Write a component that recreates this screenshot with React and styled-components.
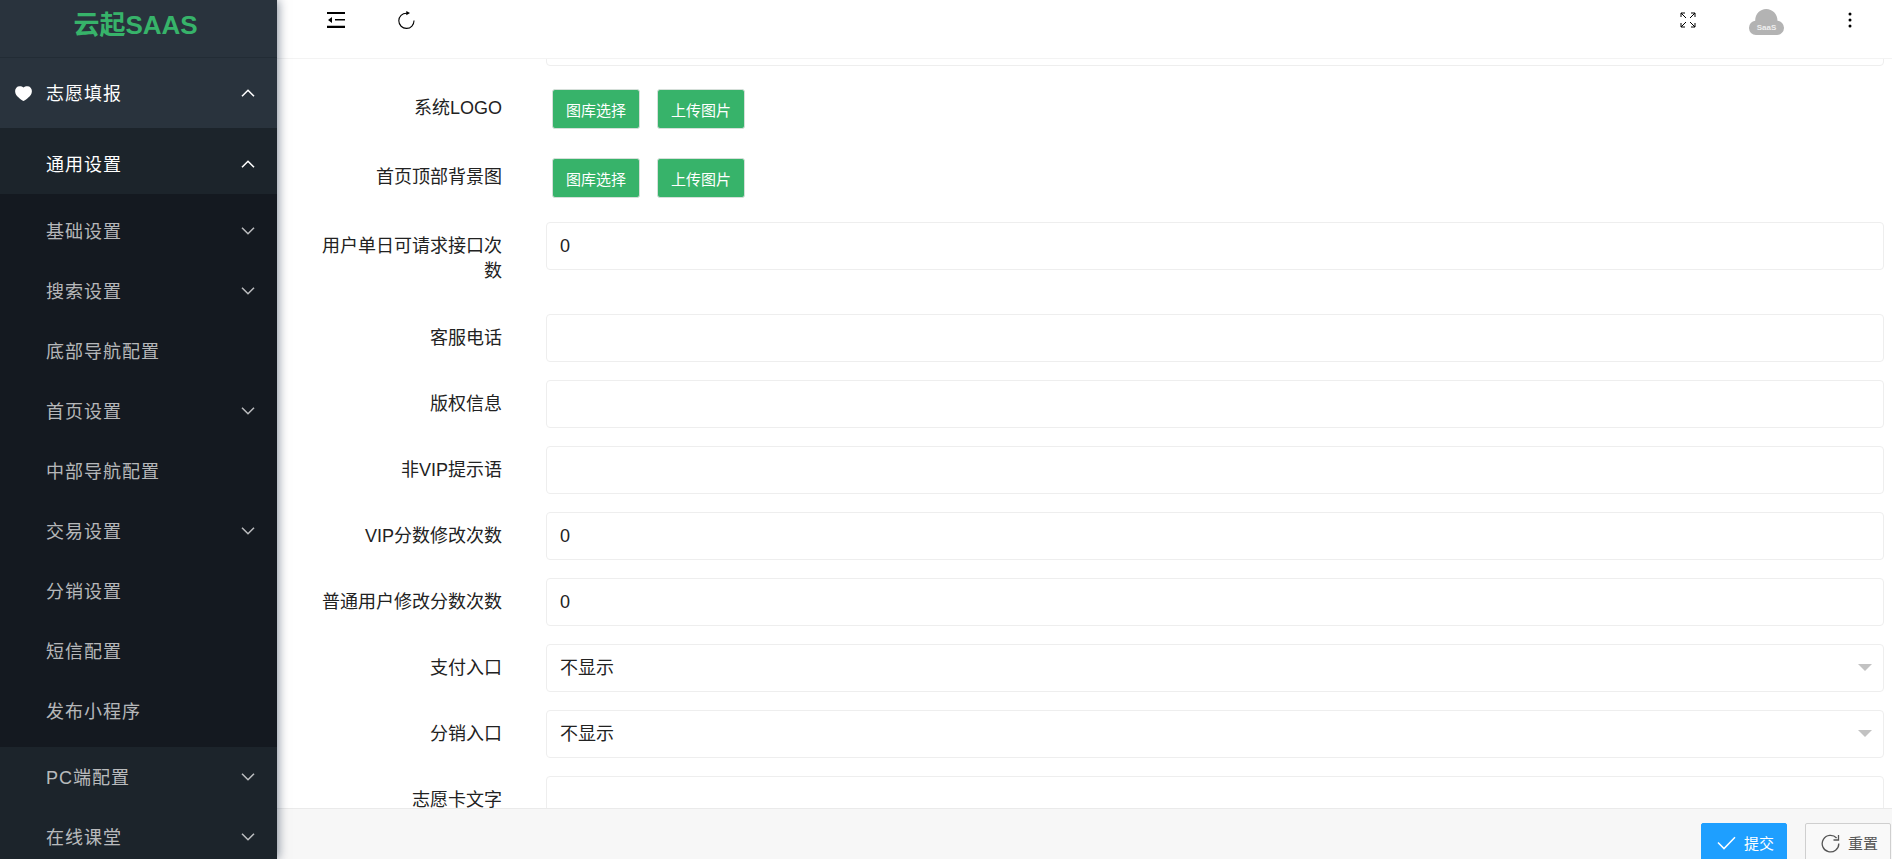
import React, { useLayoutEffect, useRef } from "react";
import styled, { createGlobalStyle } from "styled-components";

const Global = createGlobalStyle`
  *, *::before, *::after { box-sizing: border-box; }
  body {
    margin: 0;
    color: #222;
    font-family: "Liberation Sans", "Noto Sans CJK SC", sans-serif;
    font-size: 18px;
    line-height: 25px;
    background: #fff;
  }
  button, input, select { font: inherit; color: inherit; }
  button { cursor: pointer; }
  svg { display: block; }
`;

const Shell = styled.div`
  display: flex;
  height: 100vh;
  overflow: hidden;
`;

const Sidebar = styled.nav`
  position: relative;
  z-index: 1;
  flex: 0 0 277px;
  overflow: hidden;
  background: #1c242b;
  color: rgba(255, 255, 255, 0.7);
  box-shadow: 1px 0 10px rgba(0, 21, 50, 0.5);
`;

const Brand = styled.div`
  display: flex;
  justify-content: center;
  height: 58px;
  padding: 8px 6px 0 0;
  border-bottom: 1px solid #222c35;
  background: #29333d;
  color: #37b36a;
  font-size: 26px;
  font-weight: bold;
  line-height: 34px;
`;

const MenuLink = styled.a`
  display: flex;
  align-items: center;
  height: 60px;
  padding: 0 22px 0 46px;
  color: ${(p) => (p.$active ? "#fff" : "inherit")};
  text-decoration: none;
  letter-spacing: 1px;
  span {
    flex: 1;
    padding-top: 2px;
  }
`;

const RootLink = styled(MenuLink)`
  height: 70px;
  padding-left: 15px;
  background: #29333d;
  gap: 14px;
`;

const Group = styled.div`
  padding-top: 6px;
`;

const SubGroup = styled.div`
  padding: 7px 0 6px;
  background: #141920;
`;

const Main = styled.div`
  display: flex;
  flex: 1;
  min-width: 0;
  flex-direction: column;
`;

const Header = styled.header`
  display: flex;
  flex: 0 0 59px;
  justify-content: space-between;
  align-items: flex-start;
  padding: 8px 29px 0 50px;
  border-bottom: 1px solid #f3f3f3;
`;

const Tools = styled.div`
  display: flex;
  align-items: center;
  gap: 53px;
`;

const IconButton = styled.button`
  display: flex;
  align-items: center;
  justify-content: center;
  height: 24px;
  padding: 0;
  border: 0;
  background: none;
  color: #000;
`;

const Scroller = styled.div`
  flex: 1;
  min-height: 0;
  overflow: auto;
  scrollbar-width: none;
`;

const Form = styled.form`
  display: flex;
  flex-direction: column;
  gap: 18px;
  padding: 19px 8px 18px 43px;
`;

const Row = styled.div`
  display: flex;
  align-items: flex-start;
  min-height: ${(p) => (p.$tall ? 74 : 48)}px;
`;

const Label = styled.label`
  flex: 0 0 182px;
  margin-right: 44px;
  padding-top: 12px;
  text-align: right;
`;

const Input = styled.input`
  flex: 1;
  min-width: 0;
  height: 48px;
  padding: 0 13px;
  border: 1px solid #eee;
  border-radius: 4px;
  background: #fff;
  outline: none;
`;

const SelectBox = styled.div`
  position: relative;
  display: flex;
  flex: 1;
  min-width: 0;
`;

const Select = styled(Input)`
  appearance: none;
`;

const Caret = styled.svg`
  position: absolute;
  top: 20px;
  right: 12px;
  pointer-events: none;
`;

const UploadRow = styled.div`
  display: flex;
  align-items: flex-start;
  height: 51px;
  padding-top: 5px;
`;

const UploadTitle = styled.span`
  flex: 0 0 182px;
  margin-right: 50px;
  padding-top: 7px;
  text-align: right;
`;

const UploadButtons = styled.div`
  display: flex;
  gap: 17px;
`;

const UploadButton = styled.button`
  height: 40px;
  padding: 3px 13px 0;
  border: 1px solid #d5dfd9;
  border-radius: 3px;
  background: #37b36a;
  color: #fff;
  font-size: 15px;
  white-space: nowrap;
`;

const Footer = styled.footer`
  display: flex;
  flex: 0 0 51px;
  justify-content: flex-end;
  align-items: flex-start;
  gap: 18px;
  padding: 14px 1px 0;
  overflow: hidden;
  border-top: 1px solid #eaeaea;
  background: #f7f7f7;
`;

const ActionButton = styled.button`
  display: flex;
  flex-shrink: 0;
  align-items: center;
  gap: 8px;
  height: 40px;
  padding: 0 12px 0 15px;
  border: 1px solid ${(p) => (p.$primary ? "#1e9fff" : "#cfcfcf")};
  border-radius: 2px;
  background: ${(p) => (p.$primary ? "#1e9fff" : "#f9f9f9")};
  color: ${(p) => (p.$primary ? "#fff" : "#555")};
  font-size: 15px;
  white-space: nowrap;
`;

const Chevron = ({ up }) => (
  <svg width="14" height="8" viewBox="0 0 14 8" fill="none" stroke="currentColor" strokeWidth="1.6" aria-hidden="true">
    <path d={up ? "M1 7.2 7 1.3l6 5.900" : "M1 .8l6 5.900L13 .8"} />
  </svg>
);

const Heart = () => (
  <svg width="17" height="15" viewBox="0 0 17 15" fill="#fff" aria-hidden="true">
    <path d="M8.500 15C7.600 15 1.800 10.800.6 7.800-.9 3.600 1.200.2 4.600.2c1.700 0 3 .4 3.900 1.300C9.400.6 10.700.2 12.400.2c3.400 0 5.500 3.400 4 7.600C15.200 10.800 9.400 15 8.500 15Z" />
  </svg>
);

const FoldIcon = () => (
  <svg width="18" height="16" viewBox="0 0 18 16" aria-hidden="true">
    <path d="M0 0h18v2H0zM8 7h10v1.600H8zM0 13.800h18V16H0zM5 5v6L1 8z" fill="currentColor" />
  </svg>
);

const RefreshIcon = () => (
  <svg width="17" height="18" viewBox="0 0 17 18" fill="none" stroke="currentColor" strokeWidth="1.100" aria-hidden="true">
    <path d="M16 9.500A7.600 7.600 0 1 1 8.500 2.200H10" />
    <path d="M8.300 0v4.200L12 2.100z" fill="currentColor" stroke="none" />
  </svg>
);

const ExpandIcon = () => (
  <svg width="16" height="16" viewBox="0 0 16 16" fill="none" stroke="currentColor" strokeWidth="1" aria-hidden="true">
    <path d="M1 5V1h4M1 1l5 5M11 1h4v4M15 1l-5 5M1 11v4h4M1 15l5-5M15 11v4h-4M15 15l-5-5" />
  </svg>
);

const CloudIcon = () => (
  <svg width="35" height="30" viewBox="0 -4 35 30" role="img" aria-label="SaaS">
    <path d="M7 26a7 7 0 0 1-7-7.200A7.200 7.200 0 0 1 6.200 11.700C6.200 5 11 0 17.200 0s11.300 5 11.300 11.700A7.300 7.300 0 0 1 35 18.800 7.100 7.100 0 0 1 28 26Z" fill="#b3b3b3" />
    <text x="17.500" y="20.500" textAnchor="middle" fontSize="8" fontWeight="bold" fill="#eee">SaaS</text>
  </svg>
);

const DotsIcon = () => (
  <svg width="26" height="16" viewBox="0 0 26 16" fill="currentColor" aria-hidden="true">
    <circle cx="13" cy="2" r="1.500" /><circle cx="13" cy="8" r="1.500" /><circle cx="13" cy="14" r="1.500" />
  </svg>
);

const CheckIcon = () => (
  <svg width="19" height="14" viewBox="0 0 19 14" fill="none" stroke="currentColor" strokeWidth="1.500" aria-hidden="true">
    <path d="M1 6.500 7 12.600 18 1.200" />
  </svg>
);

const ResetIcon = () => (
  <svg width="19" height="19" viewBox="0 0 19 19" fill="none" stroke="currentColor" strokeWidth="1.300" aria-hidden="true">
    <path d="M17.800 9.500A8.300 8.300 0 1 1 15.600 4M17.500 1v5h-5" />
  </svg>
);

const subItems = [
  ["基础设置", true],
  ["搜索设置", true],
  ["底部导航配置", false],
  ["首页设置", true],
  ["中部导航配置", false],
  ["交易设置", true],
  ["分销设置", false],
  ["短信配置", false],
  ["发布小程序", false],
];

const MenuItem = ({ text, expandable }) => (
  <MenuLink href="#">
    <span>{text}</span>
    {expandable && <Chevron />}
  </MenuLink>
);

const Field = ({ id, label, value = "", tall }) => (
  <Row $tall={tall}>
    <Label htmlFor={id}>{label}</Label>
    <Input id={id} type="text" defaultValue={value} />
  </Row>
);

const SelectField = ({ id, label }) => (
  <Row>
    <Label htmlFor={id}>{label}</Label>
    <SelectBox>
      <Select as="select" id={id} defaultValue="0">
        <option value="0">不显示</option>
        <option value="1">显示</option>
      </Select>
      <Caret width="14" height="7" viewBox="0 0 14 7" aria-hidden="true">
        <path d="M0 0h14L7 7z" fill="#c2c2c2" />
      </Caret>
    </SelectBox>
  </Row>
);

const UploadField = ({ label }) => (
  <UploadRow role="group" aria-label={label}>
    <UploadTitle>{label}</UploadTitle>
    <UploadButtons>
      <UploadButton type="button">图库选择</UploadButton>
      <UploadButton type="button">上传图片</UploadButton>
    </UploadButtons>
  </UploadRow>
);

export default function App() {
  const scroller = useRef(null);

  useLayoutEffect(() => {
    scroller.current.scrollTop = 60;
  }, []);

  return (
    <>
      <Global />
      <Shell>
        <Sidebar>
          <Brand>云起SAAS</Brand>
          <RootLink href="#" $active>
            <Heart />
            <span>志愿填报</span>
            <Chevron up />
          </RootLink>
          <Group>
            <MenuLink href="#" $active>
              <span>通用设置</span>
              <Chevron up />
            </MenuLink>
            <SubGroup>
              {subItems.map(([text, expandable]) => (
                <MenuItem key={text} text={text} expandable={expandable} />
              ))}
            </SubGroup>
            <MenuItem text="PC端配置" expandable />
            <MenuItem text="在线课堂" expandable />
          </Group>
        </Sidebar>
        <Main>
          <Header>
            <Tools>
              <IconButton aria-label="收起菜单"><FoldIcon /></IconButton>
              <IconButton aria-label="刷新"><RefreshIcon /></IconButton>
            </Tools>
            <Tools>
              <IconButton aria-label="全屏"><ExpandIcon /></IconButton>
              <IconButton aria-label="账户"><CloudIcon /></IconButton>
              <IconButton aria-label="更多"><DotsIcon /></IconButton>
            </Tools>
          </Header>
          <Scroller ref={scroller}>
            <Form id="settings">
              <Row>
                <Label as="span" />
                <Input type="text" aria-label="系统名称" />
              </Row>
              <UploadField label="系统LOGO" />
              <UploadField label="首页顶部背景图" />
              <Field id="limit" label="用户单日可请求接口次数" value="0" tall />
              <Field id="phone" label="客服电话" />
              <Field id="copyright" label="版权信息" />
              <Field id="tip" label="非VIP提示语" />
              <Field id="vip" label="VIP分数修改次数" value="0" />
              <Field id="normal" label="普通用户修改分数次数" value="0" />
              <SelectField id="pay" label="支付入口" />
              <SelectField id="share" label="分销入口" />
              <Field id="card" label="志愿卡文字" />
            </Form>
          </Scroller>
          <Footer>
            <ActionButton form="settings" type="submit" $primary><CheckIcon />提交</ActionButton>
            <ActionButton form="settings" type="reset"><ResetIcon />重置</ActionButton>
          </Footer>
        </Main>
      </Shell>
    </>
  );
}
